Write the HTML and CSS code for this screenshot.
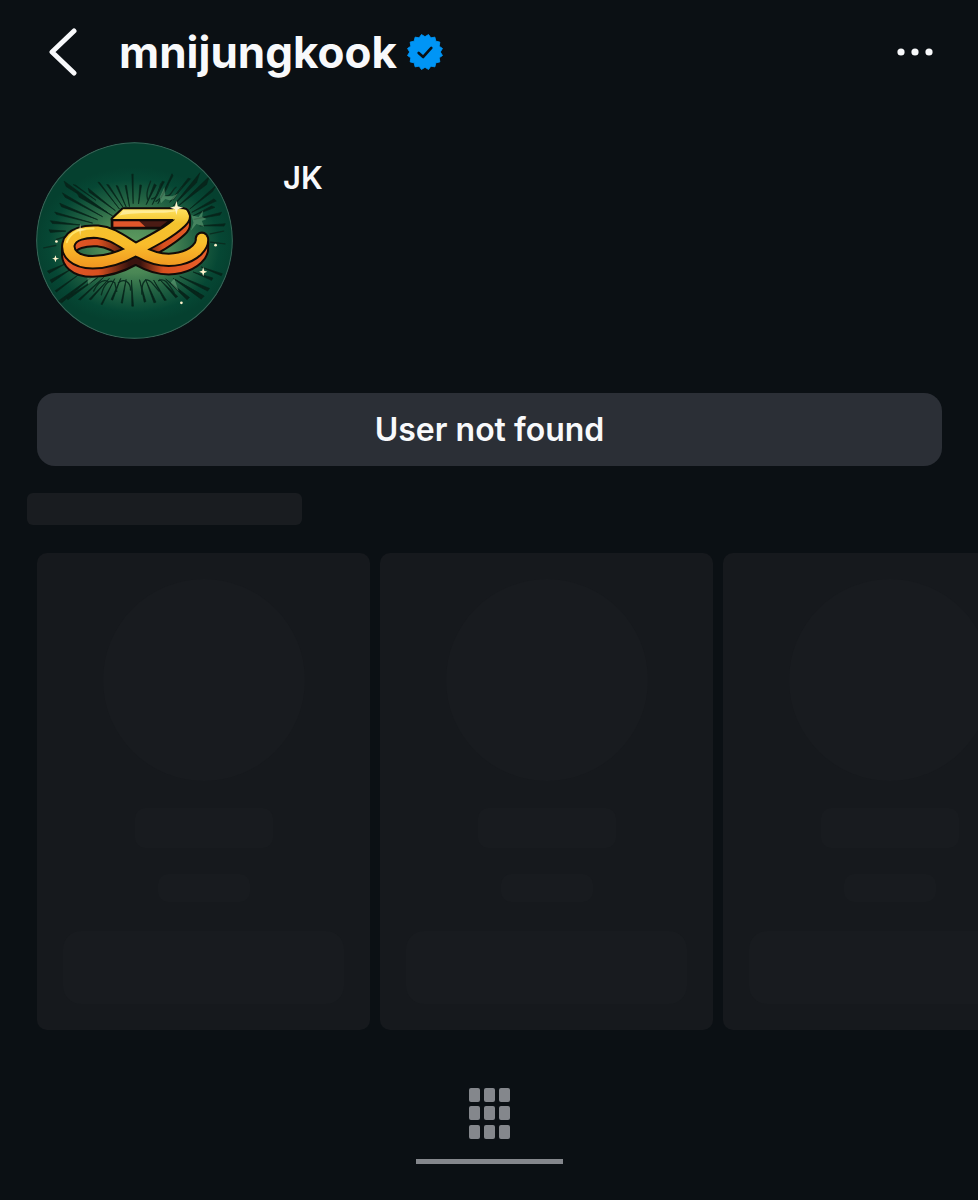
FILE: index.html
```html
<!DOCTYPE html>
<html lang="en">
<head>
  <meta charset="UTF-8">
  <meta name="viewport" content="width=device-width, initial-scale=1.0">
  <title>mnijungkook</title>
  <link rel="stylesheet" href="styles.css">
</head>
<body>
  <!-- Top bar -->
  <header class="topbar">
    <button class="icon-button" aria-label="Back">
      <svg width="28" height="48" viewBox="0 0 28 48" fill="none" stroke="#f8f9fb" stroke-width="5" stroke-linecap="round" stroke-linejoin="round">
        <path d="M25 3L3 24L25 45"/>
      </svg>
    </button>
    <h1 class="username">mnijungkook</h1>
    <svg class="verified" width="36" height="36" viewBox="-20 -20 40 40" role="img" aria-label="Verified">
      <path fill="#0095f6" stroke="#0095f6" stroke-linejoin="round" d="M0-17L3.900-19.400L6.500-15.700L11-16.500L12-12L16.500-11L15.700-6.500L19.400-3.900L17 0L19.400 3.900L15.700 6.500L16.500 11L12 12L11 16.500L6.500 15.700L3.900 19.400L0 17L-3.900 19.400L-6.500 15.700L-11 16.500L-12 12L-16.500 11L-15.700 6.500L-19.400 3.900L-17 0L-19.400-3.900L-15.700-6.500L-16.500-11L-12-12L-11-16.500L-6.500-15.700L-3.900-19.400Z"/>
      <path fill="none" stroke="#0b1014" stroke-width="3" stroke-linecap="round" stroke-linejoin="round" d="M-7 1L-2 5.500L7-4.500"/>
    </svg>
    <button class="icon-button more" aria-label="More options">
      <svg width="36" height="8" viewBox="0 0 36 8" fill="#f8f9fb">
        <circle cx="4" cy="4" r="3.600"/>
        <circle cx="18" cy="4" r="3.600"/>
        <circle cx="32" cy="4" r="3.600"/>
      </svg>
    </button>
  </header>

  <main>
    <!-- Profile -->
    <section class="profile">
      <svg class="avatar" viewBox="21 20 588 588" role="img" aria-label="Profile picture">
        <defs>
          <radialGradient id="glow" cx="315" cy="330" r="300" gradientUnits="userSpaceOnUse" gradientTransform="translate(0 72) scale(1 .78)">
            <stop offset="0" stop-color="#5f9c60"/>
            <stop offset=".35" stop-color="#4a8755"/>
            <stop offset=".6" stop-color="#236343"/>
            <stop offset=".85" stop-color="#064734"/>
            <stop offset="1" stop-color="#05402f"/>
          </radialGradient>
          <linearGradient id="gold" x1="0" y1="218" x2="0" y2="398" gradientUnits="userSpaceOnUse">
            <stop offset="0" stop-color="#ffe25f"/>
            <stop offset=".25" stop-color="#f3c32e"/>
            <stop offset=".6" stop-color="#f9bc2b"/>
            <stop offset="1" stop-color="#f0941f"/>
          </linearGradient>
          <linearGradient id="side" x1="100" y1="0" x2="530" y2="0" gradientUnits="userSpaceOnUse">
            <stop offset="0" stop-color="#e0592a"/>
            <stop offset=".25" stop-color="#d9501f"/>
            <stop offset=".46" stop-color="#3a130e"/>
            <stop offset=".54" stop-color="#3a130e"/>
            <stop offset=".7" stop-color="#d9501f"/>
            <stop offset="1" stop-color="#e9602a"/>
          </linearGradient>
          <path id="letter" d="M430 236H448Q474 237 452 258C418 290 370 314 317 342Q250 379 190 379C135 379 114 350 118 326C125 293 170 286 205 288C255 292 285 324 330 347C375 372 415 376 450 368C495 357 520 330 516 308"/>
        </defs>

        <circle cx="315" cy="314" r="294" fill="url(#glow)"/>

        <!-- Burst lines -->
        <g fill="#07251b" stroke="#07251b" stroke-width="2">
          <path d="M105 137L235 231L111 153ZM100 172L220 243L108 185ZM92 203L205 252L97 213ZM77 229L190 262L82 236ZM64 255L155 268L70 263ZM132 147L200 194L140 149ZM60 282L110 286L64 290Z"/>
          <path d="M143 170L250 241L150 185ZM177 158L258 225L180 170ZM206 140L270 220L211 141ZM232 147L280 214L238 148ZM260 150L290 214L265 151ZM287 150L300 213L291 150ZM307 116L311 204L311 116ZM331 148L327 205L336 149Z"/>
          <path d="M510 112L430 211L500 142ZM538 123L446 211L530 147ZM558 150L480 220L548 168ZM475 128L420 200L482 130ZM427 115L385 204L430 121ZM398 137L368 207L404 139ZM374 145L350 207L380 149ZM552 190L486 230L559 196ZM575 230L492 251L570 238ZM586 264L510 270L582 271ZM545 211L489 241L555 215Z"/>
          <path d="M87 495L190 421L98 500ZM112 484L205 425L116 491ZM148 490L223 424L154 491ZM180 489L240 427L185 491ZM215 504L256 428L219 505ZM63 432L125 400L68 440ZM55 405L110 383L60 412ZM78 464L148 416L82 468ZM245 490L274 427L250 492Z"/>
          <path d="M275 500L290 430L279 501ZM307 510L306 432L312 510ZM344 498L330 431L349 496ZM373 500L348 430L379 498ZM404 493L372 432L410 492ZM438 485L390 430L444 481ZM472 491L408 429L479 484ZM514 489L430 427L523 480ZM533 465L450 421L539 457ZM545 433L490 408L549 426ZM574 419L514 393L577 413ZM500 476L436 430L505 470Z"/>
        </g>
        <g fill="none" stroke="#0a2d20" stroke-width="4" stroke-linecap="round">
          <path d="M354 191C347 169 359 151 363 137M366 190C387 187 389 159 393 145M379 197C400 187 407 165 415 150M406 181C427 184 426 162 439 155M431 192L456 154M110 302L82 311M80 329L44 336M541 294L581 286M542 319L585 324"/>
          <path d="M193 465C207 436 222 430 236 436M216 476C225 441 242 428 256 440L262 466M267 440C285 425 304 440 303 462M337 474C335 434 350 423 366 439L388 465M387 434C407 424 416 445 433 469"/>
        </g>
        <g fill="#6fac80">
          <path d="M485 239L506 244L520 224L517 244L530 250L516 256L523 273L500 265L483 285L491 261Z" opacity=".5"/>
          <path d="M390 185L404 155L407 181L428 182L445 174L432 191L419 194L407 190L394 203Z" opacity=".5"/>
          <path d="M174 425L205 421L177 446ZM434 427L447 466L423 440Z" opacity=".5"/>
        </g>

        <!-- Extruded side -->
        <g fill="none" stroke="#120b08" stroke-width="43" stroke-linejoin="round">
          <use href="#letter" y="8"/>
          <use href="#letter" y="16"/>
          <use href="#letter" y="25"/>
        </g>
        <circle cx="516" cy="326" r="20" fill="#120b08"/>
        <g fill="none" stroke="url(#side)" stroke-width="31" stroke-linejoin="round">
          <use href="#letter" y="25"/>
          <use href="#letter" y="17"/>
          <use href="#letter" y="10"/>
        </g>
        <path d="M249 252H424L394 276H249Z" fill="#e0562b"/>
        <path d="M325 252H424L394 276H350Z" fill="#4a1b14"/>
        <path d="M248 250V277H394L424 253" fill="none" stroke="#120b08" stroke-width="8" stroke-linejoin="round"/>

        <!-- Front face -->
        <g fill="#120b08" stroke="#120b08" stroke-linejoin="round">
          <use href="#letter" fill="none" stroke-width="43"/>
          <path d="M250 250L281 221H461Q475 223 473 236L430 250Z" stroke-width="13"/>
          <circle cx="516" cy="309" r="15" stroke-width="13"/>
        </g>
        <path d="M250 250L281 221H461Q475 223 473 236L430 250Z" fill="url(#gold)"/>
        <use href="#letter" fill="none" stroke="url(#gold)" stroke-width="31"/>
        <circle cx="516" cy="309" r="15" fill="#f6c02d"/>
        <path d="M281 224H445C415 238 325 226 269 240Z" fill="#fff0a5" opacity=".8"/>
        <path d="M113 319C123 288 155 277 193 278" fill="none" stroke="#ffe263" stroke-width="6" stroke-linecap="round"/>

        <!-- Sparkles -->
        <g fill="#fff3cc">
          <path d="M440 195L444 212L460 216L444 221L440 238L436 221L421 216L436 212Z"/>
          <path d="M520 394L523 404L532 407L523 411L520 421L517 411L508 407L517 404Z"/>
          <path d="M79 358L82 366L90 368L82 371L79 379L76 371L69 368L76 366Z"/>
          <path d="M153 263L156 278L171 283L156 286L153 301L150 286L137 283L150 278Z" opacity=".5"/>
          <circle cx="82" cy="317" r="4"/>
          <circle cx="557" cy="328" r="4"/>
          <circle cx="455" cy="500" r="4"/>
        </g>
        <circle cx="315" cy="314" r="292" fill="none" stroke="#3b6257" stroke-width="3"/>
      </svg>
      <h2 class="display-name">JK</h2>
    </section>

    <button class="status-button">User not found</button>

    <!-- Loading suggestions -->
    <div class="skeleton-title"></div>
    <section class="suggestions" aria-label="Loading suggestions">
      <div class="card">
        <div class="skeleton photo"></div>
        <div class="skeleton name"></div>
        <div class="skeleton detail"></div>
        <div class="skeleton follow"></div>
      </div>
      <div class="card">
        <div class="skeleton photo"></div>
        <div class="skeleton name"></div>
        <div class="skeleton detail"></div>
        <div class="skeleton follow"></div>
      </div>
      <div class="card">
        <div class="skeleton photo"></div>
        <div class="skeleton name"></div>
        <div class="skeleton detail"></div>
        <div class="skeleton follow"></div>
      </div>
    </section>
  </main>

  <!-- Tabs -->
  <nav class="tabs">
    <button class="tab" aria-label="Posts">
      <svg width="41" height="51" viewBox="0 0 41 51" fill="#84878c">
        <rect x="0" y="0" width="11" height="14" rx="2"/>
        <rect x="15" y="0" width="11" height="14" rx="2"/>
        <rect x="30" y="0" width="11" height="14" rx="2"/>
        <rect x="0" y="18" width="11" height="14" rx="2"/>
        <rect x="15" y="18" width="11" height="14" rx="2"/>
        <rect x="30" y="18" width="11" height="14" rx="2"/>
        <rect x="0" y="37" width="11" height="14" rx="2"/>
        <rect x="15" y="37" width="11" height="14" rx="2"/>
        <rect x="30" y="37" width="11" height="14" rx="2"/>
      </svg>
    </button>
  </nav>
</body>
</html>
```
FILE: styles.css
```css
* {
  box-sizing: border-box;
}

body {
  margin: 0;
  background: #0b1014;
  color: #f8f9fb;
  font-family: Inter, "Liberation Sans", sans-serif;
  overflow-x: hidden;
}

h1,
h2 {
  margin: 0;
}

button {
  padding: 0;
  border: 0;
  background: none;
  color: inherit;
  font-family: inherit;
  cursor: pointer;
}

svg {
  display: block;
}

/* Top bar */
.topbar {
  display: flex;
  align-items: center;
  height: 104px;
  padding: 0 45px 0 49px;
}

.icon-button {
  flex: none;
}

.username {
  margin-left: 42px;
  font-size: 44px;
  font-weight: 700;
  line-height: 56px;
}

.verified {
  flex: none;
  margin-left: 10px;
}

.more {
  margin-left: auto;
}

/* Profile */
.profile {
  display: flex;
  gap: 50px;
  padding: 38px 36px 0;
}

.avatar {
  flex: none;
  width: 197px;
  height: 197px;
  border-radius: 50%;
}

.display-name {
  padding-top: 16px;
  font-size: 31px;
  font-weight: 600;
  line-height: 40px;
}

.status-button {
  display: block;
  width: calc(100% - 73px);
  height: 73px;
  margin: 54px 36px 0 37px;
  border-radius: 18px;
  background: #2b2f36;
  font-size: 32px;
  font-weight: 600;
}

/* Placeholders */
.skeleton-title {
  width: 275px;
  height: 32px;
  margin: 27px 0 28px 27px;
  border-radius: 6px;
  background: #191c20;
}

.suggestions {
  display: flex;
  gap: 10px;
  padding-left: 37px;
  overflow: hidden;
}

.card {
  flex: none;
  display: flex;
  flex-direction: column;
  align-items: center;
  width: 333px;
  padding: 26px;
  border-radius: 10px;
  background: #16191d;
}

.skeleton {
  border-radius: 10px;
  background: #181b1f;
}

.photo {
  width: 202px;
  height: 202px;
  border-radius: 50%;
}

.name {
  width: 138px;
  height: 40px;
  margin-top: 27px;
}

.detail {
  width: 92px;
  height: 28px;
  margin-top: 26px;
}

.follow {
  width: 100%;
  height: 73px;
  margin-top: 29px;
  border-radius: 18px;
}

/* Tabs */
.tabs {
  display: flex;
  justify-content: center;
  margin-top: 58px;
}

.tab {
  display: flex;
  justify-content: center;
  width: 147px;
  padding-bottom: 20px;
  border-bottom: 5px solid #84878c;
}
```
